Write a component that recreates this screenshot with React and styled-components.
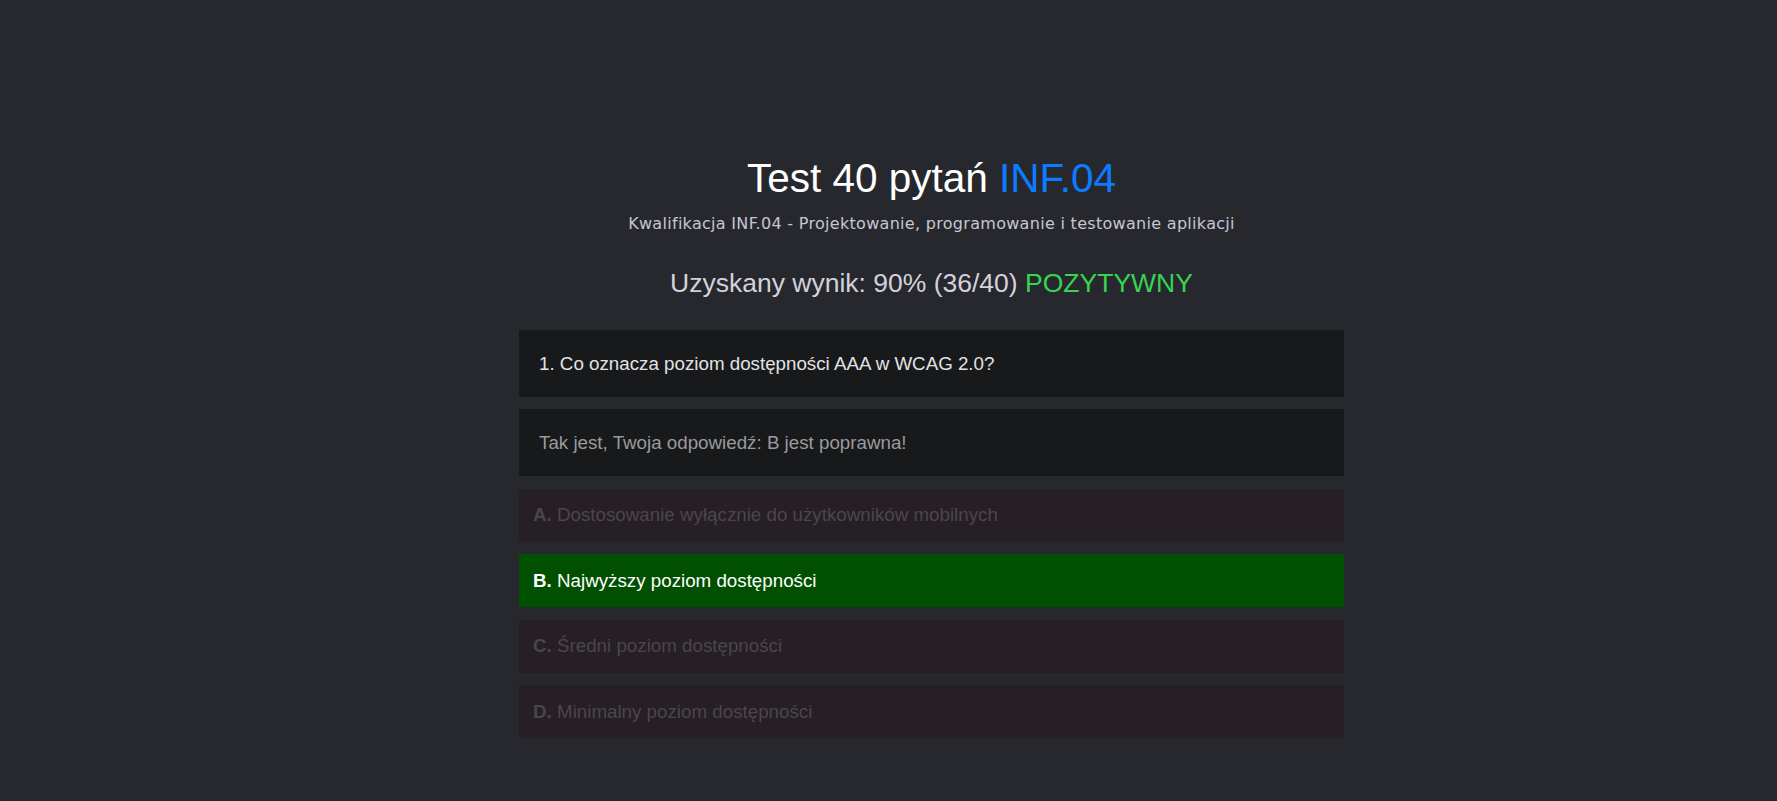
import React from "react";
import styled, { createGlobalStyle } from "styled-components";

const answers = [
  { letter: "A", text: "Dostosowanie wyłącznie do użytkowników mobilnych" },
  { letter: "B", text: "Najwyższy poziom dostępności", correct: true },
  { letter: "C", text: "Średni poziom dostępności" },
  { letter: "D", text: "Minimalny poziom dostępności" },
];

const App = () => {
  return (
    <>
      <GlobalStyle />
      <Page>
        <Quiz>
          <Title>
            Test 40 pytań <span>INF.04</span>
          </Title>
          <Subtitle>
            Kwalifikacja INF.04 - Projektowanie, programowanie i testowanie
            aplikacji
          </Subtitle>
          <Score>
            Uzyskany wynik: 90% (36/40) <span>POZYTYWNY</span>
          </Score>

          <Panel>1. Co oznacza poziom dostępności AAA w WCAG 2.0?</Panel>
          <Panel $muted>Tak jest, Twoja odpowiedź: B jest poprawna!</Panel>

          {answers.map((a) => (
            <Answer key={a.letter} $correct={a.correct}>
              <b>{a.letter}.</b> {a.text}
            </Answer>
          ))}
        </Quiz>
      </Page>
    </>
  );
};

//Styled Components

const GlobalStyle = createGlobalStyle`
  html, body {
    margin: 0;
    background: #27282e;
    font-family: "Liberation Sans", Arial, sans-serif;
  }
`;

const Page = styled.div`
  display: flex;
  justify-content: center;
  min-height: 801px;
  padding: 155px 0 0 86px;
  box-sizing: border-box;
`;

const Quiz = styled.main`
  display: flex;
  flex-direction: column;
  width: 825px;
`;

const Title = styled.h1`
  margin: 0;
  font-size: 40.5px;
  line-height: 46px;
  font-weight: 400;
  color: #ffffff;
  text-align: center;

  span {
    color: #0d7bff;
  }
`;

const Subtitle = styled.p`
  margin: 12px 0 0;
  font-family: "DejaVu Sans", "Noto Sans", sans-serif;
  font-size: 16px;
  letter-spacing: 0.3px;
  line-height: 22px;
  color: #c6c6d2;
  text-align: center;
`;

const Score = styled.h2`
  margin: 33px 0 0;
  font-size: 26.5px;
  line-height: 31px;
  font-weight: 400;
  color: #d2d2da;
  text-align: center;

  span {
    color: #36d451;
  }
`;

const Panel = styled.div`
  display: flex;
  align-items: center;
  height: 67px;
  margin-top: ${(p) => (p.$muted ? "12px" : "31px")};
  padding: 0 20px;
  background: #18191b;
  color: ${(p) => (p.$muted ? "#9a9a9c" : "#e2e2e4")};
  font-size: 18.75px;
`;

const Answer = styled.div`
  display: flex;
  align-items: center;
  gap: 0.28em;
  height: 53px;
  margin-top: 12.5px;
  padding: 0 14px;
  background: ${(p) => (p.$correct ? "#005000" : "#261f24")};
  color: ${(p) => (p.$correct ? "#ffffff" : "#4b464c")};
  font-size: 18.75px;

  b {
    font-weight: 700;
  }
`;

export default App;
